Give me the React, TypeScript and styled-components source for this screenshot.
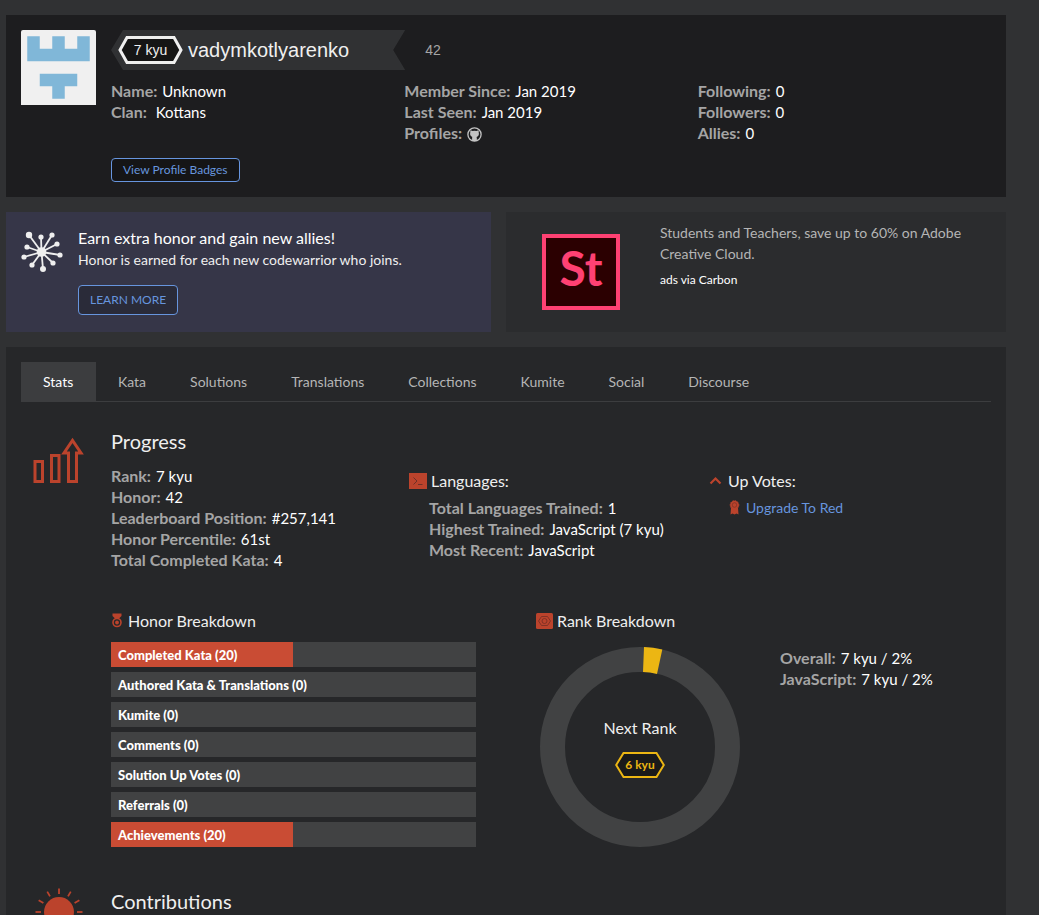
import React from "react";
import styled, { createGlobalStyle } from "styled-components";

const GlobalStyle = createGlobalStyle`
  *, *::before, *::after { box-sizing: border-box; }
  html { background: #303133; }
  body {
    margin: 0;
    background: #303133;
    color: #efefef;
    font-family: Lato, "Liberation Sans", sans-serif;
    font-size: 14px;
    line-height: 21px;
  }
  h1, h2, h3, p, dl, dd, dt, ul { margin: 0; padding: 0; font-weight: 400; }
  button { font-family: inherit; cursor: pointer; }
  svg { display: block; flex: none; }
`;

const RED = "#bb432c";
const LINK = "#6795de";
const GOLD = "#ecb613";

const Page = styled.main`
  display: flex;
  flex-direction: column;
  gap: 15px;
  min-height: 100vh;
  padding: 15px 33px 0 6px;
`;

const ProfileCard = styled.header`
  display: flex;
  gap: 15px;
  padding: 15px;
  background: #1d1d1f;
`;

const ProfileBody = styled.div`
  flex: 1;
  min-width: 0;
`;

const Banner = styled.div`
  display: flex;
  align-items: center;
  gap: 20px;
  height: 40px;
  margin-bottom: 10px;
  font-family: "Liberation Sans", Arial, sans-serif;
  color: #a5a5a5;
`;

const Ribbon = styled.div`
  display: flex;
  align-items: center;
  gap: 5px;
  height: 40px;
  padding: 0 56px 0 7px;
  background: #303133;
  clip-path: polygon(12px 0, 100% 0, calc(100% - 12px) 50%, 100% 100%, 12px 100%, 0 50%);
`;

const UserName = styled.h1`
  font-size: 20px;
  line-height: 24px;
  color: #efefef;
`;

const RankBox = styled.span<{ $small?: boolean }>`
  display: grid;
  place-items: center;
  width: ${(p) => (p.$small ? 50 : 65)}px;
  height: ${(p) => (p.$small ? 26 : 28)}px;
  font-size: ${(p) => (p.$small ? 12 : 14)}px;
  font-weight: ${(p) => (p.$small ? 700 : 400)};
  color: ${(p) => (p.$small ? GOLD : "#efefef")};
  & > * { grid-area: 1 / 1; }
`;

const Columns = styled.div`
  display: grid;
  grid-template-columns: repeat(3, 1fr);
`;

const ProgressColumns = styled.div`
  display: grid;
  grid-template-columns: 298fr 300fr 282fr;
`;

const StatList = styled.dl<{ $indent?: boolean }>`
  padding-left: ${(p) => (p.$indent ? 20 : 0)}px;
`;

const StatRow = styled.div`
  display: flex;
  align-items: baseline;
  gap: 5px;
  height: 21px;
  font-size: 15px;
  dt { font-size: 16px; font-weight: 700; color: #a5a5a5; }
  dd { color: #fff; }
  dd svg { align-self: center; margin-bottom: -3px; }
`;

const OutlineButton = styled.button<{ $large?: boolean }>`
  display: block;
  height: ${(p) => (p.$large ? 30 : 24)}px;
  margin-top: 15px;
  padding: 0 11px;
  border: 1px solid ${LINK};
  border-radius: 4px;
  background: ${(p) => (p.$large ? "#2a2b39" : "#151516")};
  color: ${LINK};
  font-size: 12px;
  line-height: 20px;
`;

const PromoRow = styled.div`
  display: grid;
  grid-template-columns: 485fr 500fr;
  gap: 15px;
`;

const HonorPromo = styled.section`
  display: flex;
  gap: 15px;
  min-height: 120px;
  padding: 15px;
  background: #363648;
  h2 { font-size: 16px; line-height: 22px; color: #fff; }
`;

const PromoIcon = styled.div`
  padding-top: 4px;
`;

const AdPromo = styled.aside`
  display: flex;
  gap: 40px;
  min-height: 120px;
  padding: 10px 36px;
  background: #2b2c2e;
  color: #b5b5b5;
`;

const AdLogo = styled.div`
  display: grid;
  place-items: center;
  flex: none;
  width: 78px;
  height: 76px;
  margin-top: 12px;
  padding-bottom: 8px;
  border: 4px solid #ff4173;
  background: #2b0001;
  color: #ff4173;
  font: 700 48px/60px Lato, sans-serif;
`;

const AdText = styled.div`
  display: flex;
  flex-direction: column;
  gap: 5px;
  a { color: #fff; font-size: 12px; text-decoration: none; }
`;

const Panel = styled.section`
  flex: 1;
  padding: 15px;
  background: #262729;
`;

const Tabs = styled.nav`
  display: flex;
  height: 40px;
  border-bottom: 1px solid #3c3d3f;
`;

const Tab = styled.a<{ $active?: boolean }>`
  min-width: ${(p) => (p.$active ? 75 : 0)}px;
  height: 40px;
  padding: 0 22px;
  line-height: 40px;
  text-decoration: none;
  background: ${(p) => (p.$active ? "#3c3d3f" : "transparent")};
  color: ${(p) => (p.$active ? "#fff" : "#b5b5b5")};
`;

const Section = styled.section`
  display: grid;
  grid-template-columns: 90px 1fr;
  padding-top: 24px;
  & + & { padding-top: 39px; }
`;

const SectionIcon = styled.div<{ $top: number }>`
  padding: ${(p) => p.$top}px 12px 0;
`;

const SectionTitle = styled.h2`
  margin-bottom: 9px;
  font-size: 20px;
  line-height: 30px;
`;

const SubTitle = styled.h3<{ $gap: number }>`
  display: flex;
  align-items: center;
  gap: ${(p) => p.$gap}px;
  height: 21px;
  margin-bottom: 11px;
  font-size: 16px;
  line-height: 21px;
`;

const TopicBlock = styled.div`
  padding-top: 44px;
  h3 { margin-bottom: 6px; }
`;

const UpgradeLink = styled.a`
  display: flex;
  align-items: center;
  gap: 6px;
  padding-left: 20px;
  color: ${LINK};
  text-decoration: none;
`;

const Breakdown = styled.div`
  display: grid;
  grid-template-columns: 365fr 455fr;
  gap: 60px;
  margin-top: 40px;
`;

const Bars = styled.ul`
  display: flex;
  flex-direction: column;
  gap: 5px;
  list-style: none;
`;

const Bar = styled.li<{ $fill: number }>`
  height: 25px;
  padding: 0 7px;
  background: linear-gradient(to right, #c94c34 ${(p) => p.$fill}%, #414243 ${(p) => p.$fill}%);
  color: #fff;
  font-size: 13px;
  font-weight: 900;
  line-height: 26px;
`;

const RankRow = styled.div`
  display: flex;
  gap: 40px;
  padding: 5px 0 0 4px;
`;

const Chart = styled.div`
  display: grid;
  place-items: center;
  flex: none;
  width: 200px;
  height: 200px;
  & > * { grid-area: 1 / 1; }
`;

const ChartLabel = styled.div`
  display: flex;
  flex-direction: column;
  align-items: center;
  gap: 14px;
  font-size: 16px;
`;

const Avatar = () => (
  <svg width="75" height="75" viewBox="0 0 75 75" role="img" aria-label="Avatar">
    <path d="M2 0H73a2 2 0 0 1 2 2V75H0V2a2 2 0 0 1 2-2Z" fill="#f0f0f0" />
    <path d="M6.250 6.250H18.750V18.750H31.250V6.250H43.750V18.750H56.250V6.250H68.750V31.250H6.250ZM18.750 43.750H56.250V56.250H43.750V68.750H31.250V56.250H18.750Z" fill="#80b7d8" />
  </svg>
);

const Hex = ({ small }: { small?: boolean }) =>
  small ? (
    <svg width="50" height="26" aria-hidden="true">
      <path d="M8.500 1H41.500L48.800 13L41.500 25H8.500L1.200 13Z" fill="#1a1a1a" stroke={GOLD} strokeWidth="2" />
    </svg>
  ) : (
    <svg width="65" height="28" aria-hidden="true">
      <path d="M9 1.500H56L63 14L56 26.500H9L2 14Z" fill="#151515" stroke="#efefef" strokeWidth="3" />
    </svg>
  );

const GithubIcon = () => (
  <svg width="15" height="15" viewBox="0 0 15 15" role="img" aria-label="GitHub">
    <circle cx="7.500" cy="7.500" r="6.600" fill="none" stroke="#c4c4c4" strokeWidth="1.300" />
    <path d="M3.500 3.300L5.600 4Q7.500 3.600 9.400 4L11.500 3.300Q11.900 4.300 11.700 5.300Q12.600 9 9.600 10Q9.900 10.500 9.900 14H5.100V10.500Q5.100 10 5.400 10Q2.400 9 3.300 5.300Q3.100 4.300 3.500 3.300Z" fill="#c4c4c4" />
  </svg>
);

const spokes = [
  [8, 4, 3.2],
  [20, 6, 2.6],
  [31, 4, 2.6],
  [36, 13, 2.6],
  [39, 24, 2.6],
  [32, 32, 2.6],
  [22, 38, 3],
  [11, 34, 2.6],
  [3, 26, 2.6],
  [6, 16, 2.6],
];

const BurstIcon = () => (
  <svg width="42" height="42" viewBox="0 0 42 42" fill="#efefef" stroke="#efefef" aria-hidden="true">
    {spokes.map(([x, y, r]) => (
      <g key={`${x}-${y}`}>
        <path d={`M20.500 21L${x} ${y}`} strokeWidth="1.800" />
        <circle cx={x} cy={y} r={r} strokeWidth="0" />
      </g>
    ))}
    <circle cx="20.500" cy="21" r="4.800" strokeWidth="0" />
  </svg>
);

const ProgressIcon = () => (
  <svg width="52" height="47" viewBox="0 0 52 47" fill="none" stroke={RED} strokeWidth="3" aria-hidden="true">
    <path d="M2 24.500H9.500V44.500H2ZM18.500 18.500H26V44.500H18.500ZM35.500 44.500V16H31L39.500 3.500L48 16H43.500V44.500Z" />
  </svg>
);

const SunIcon = () => (
  <svg width="52" height="52" viewBox="0 0 52 52" aria-hidden="true">
    <circle cx="26" cy="26" r="15" fill={RED} />
    <g stroke={RED} strokeWidth="1.800">
      {[0, 30, 60, 90, 120, 150, 180, 210, 240, 270, 300, 330].map((a) => (
        <path key={a} d="M26 2.500V8" transform={`rotate(${a} 26 26)`} />
      ))}
    </g>
  </svg>
);

const TerminalIcon = () => (
  <svg width="18" height="16" viewBox="0 0 18 16" aria-hidden="true">
    <path d="M0 0H18V16H0Z" fill={RED} />
    <path d="M4.500 4.500L8 8L4.500 11.500M9 11.500H13.500" fill="none" stroke="#6f3028" strokeWidth="1" />
  </svg>
);

const CaretIcon = () => (
  <svg width="13" height="16" viewBox="0 0 13 16" aria-hidden="true">
    <path d="M1.500 10.500L6.500 5.500L11.500 10.500" fill="none" stroke={RED} strokeWidth="2.200" />
  </svg>
);

const RibbonIcon = () => (
  <svg width="11" height="15" viewBox="0 0 11 15" aria-hidden="true">
    <path d="M2 8H9L9.500 14.500L7.500 13.500L5.500 14.500L3.500 13.500L1.500 14.500Z" fill={RED} />
    <circle cx="5.500" cy="5" r="4.300" fill={RED} stroke={RED} strokeDasharray="1.500 1" />
    <circle cx="5.500" cy="5" r="2.300" fill="none" stroke="#7c3025" strokeWidth="0.700" />
  </svg>
);

const MedalIcon = () => (
  <svg width="12" height="15" viewBox="0 0 12 15" aria-hidden="true">
    <path d="M1.500 0.500H10.500V3L8 5.500H4L1.500 3Z" fill={RED} />
    <circle cx="6" cy="9.500" r="4" fill="#262729" stroke={RED} strokeWidth="1.600" />
    <circle cx="6" cy="9.500" r="1.900" fill={RED} />
  </svg>
);

const TargetIcon = () => (
  <svg width="17" height="16" viewBox="0 0 17 16" fill="none" aria-hidden="true">
    <rect width="17" height="16" rx="1.500" fill={RED} />
    <g stroke="#7c3025" strokeWidth="0.900">
      <path d="M5.500 3.500H11.500L14.500 8L11.500 12.500H5.500L2.500 8Z" />
      <circle cx="8.500" cy="8" r="2.500" />
    </g>
  </svg>
);

const Donut = () => (
  <svg width="200" height="200" viewBox="0 0 200 200" aria-hidden="true">
    <circle cx="100" cy="100" r="87.500" fill="none" stroke="#414243" strokeWidth="25" />
    <path d="M104 0.100A100 100 0 0 1 122.300 2.500L117 26.900A75 75 0 0 0 103 25.100Z" fill={GOLD} />
  </svg>
);

type Stat = [string, React.ReactNode];

const Stats = ({ items, indent }: { items: Stat[]; indent?: boolean }) => (
  <StatList $indent={indent}>
    {items.map(([label, value]) => (
      <StatRow key={label}>
        <dt>{label}:</dt>
        <dd>{value}</dd>
      </StatRow>
    ))}
  </StatList>
);

const tabs = ["Stats", "Kata", "Solutions", "Translations", "Collections", "Kumite", "Social", "Discourse"];

const honor: [string, number][] = [
  ["Completed Kata (20)", 50],
  ["Authored Kata & Translations (0)", 0],
  ["Kumite (0)", 0],
  ["Comments (0)", 0],
  ["Solution Up Votes (0)", 0],
  ["Referrals (0)", 0],
  ["Achievements (20)", 50],
];

export default function App() {
  return (
    <>
      <GlobalStyle />
      <Page>
        <ProfileCard>
          <Avatar />
          <ProfileBody>
            <Banner>
              <Ribbon>
                <RankBox>
                  <Hex />
                  <span>7 kyu</span>
                </RankBox>
                <UserName>vadymkotlyarenko</UserName>
              </Ribbon>
              <span>42</span>
            </Banner>
            <Columns>
              <Stats items={[["Name", "Unknown"], ["Clan", <>&nbsp;Kottans</>]]} />
              <Stats items={[["Member Since", "Jan 2019"], ["Last Seen", "Jan 2019"], ["Profiles", <GithubIcon />]]} />
              <Stats items={[["Following", "0"], ["Followers", "0"], ["Allies", "0"]]} />
            </Columns>
            <OutlineButton type="button">View Profile Badges</OutlineButton>
          </ProfileBody>
        </ProfileCard>

        <PromoRow>
          <HonorPromo>
            <PromoIcon><BurstIcon /></PromoIcon>
            <div>
              <h2>Earn extra honor and gain new allies!</h2>
              <p>Honor is earned for each new codewarrior who joins.</p>
              <OutlineButton type="button" $large>LEARN MORE</OutlineButton>
            </div>
          </HonorPromo>
          <AdPromo>
            <AdLogo>St</AdLogo>
            <AdText>
              <p>Students and Teachers, save up to 60% on Adobe Creative Cloud.</p>
              <a href="#carbon">ads via Carbon</a>
            </AdText>
          </AdPromo>
        </PromoRow>

        <Panel>
          <Tabs>
            {tabs.map((t, i) => (
              <Tab key={t} href={`#${t.toLowerCase()}`} $active={i === 0}>{t}</Tab>
            ))}
          </Tabs>

          <Section>
            <SectionIcon $top={11}><ProgressIcon /></SectionIcon>
            <div>
              <ProgressColumns>
                <div>
                  <SectionTitle>Progress</SectionTitle>
                  <Stats
                    items={[
                      ["Rank", "7 kyu"],
                      ["Honor", "42"],
                      ["Leaderboard Position", "#257,141"],
                      ["Honor Percentile", "61st"],
                      ["Total Completed Kata", "4"],
                    ]}
                  />
                </div>
                <TopicBlock>
                  <SubTitle $gap={4}><TerminalIcon />Languages:</SubTitle>
                  <Stats
                    indent
                    items={[
                      ["Total Languages Trained", "1"],
                      ["Highest Trained", "JavaScript (7 kyu)"],
                      ["Most Recent", "JavaScript"],
                    ]}
                  />
                </TopicBlock>
                <TopicBlock>
                  <SubTitle $gap={6}><CaretIcon />Up Votes:</SubTitle>
                  <UpgradeLink href="#upgrade"><RibbonIcon />Upgrade To Red</UpgradeLink>
                </TopicBlock>
              </ProgressColumns>

              <Breakdown>
                <div>
                  <SubTitle $gap={5}><MedalIcon />Honor Breakdown</SubTitle>
                  <Bars>
                    {honor.map(([label, fill]) => (
                      <Bar key={label} $fill={fill}>{label}</Bar>
                    ))}
                  </Bars>
                </div>
                <div>
                  <SubTitle $gap={4}><TargetIcon />Rank Breakdown</SubTitle>
                  <RankRow>
                    <Chart>
                      <Donut />
                      <ChartLabel>
                        Next Rank
                        <RankBox $small>
                          <Hex small />
                          <span>6 kyu</span>
                        </RankBox>
                      </ChartLabel>
                    </Chart>
                    <Stats items={[["Overall", "7 kyu / 2%"], ["JavaScript", "7 kyu / 2%"]]} />
                  </RankRow>
                </div>
              </Breakdown>
            </div>
          </Section>

          <Section>
            <SectionIcon $top={0}><SunIcon /></SectionIcon>
            <SectionTitle>Contributions</SectionTitle>
          </Section>
        </Panel>
      </Page>
    </>
  );
}
